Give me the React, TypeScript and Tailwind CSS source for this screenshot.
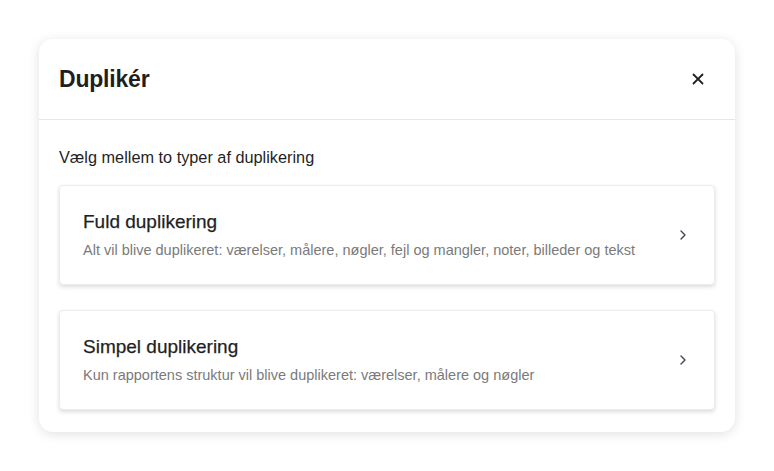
import { ChevronRight, X } from "lucide-react";

const options = [
  {
    title: "Fuld duplikering",
    description:
      "Alt vil blive duplikeret: værelser, målere, nøgler, fejl og mangler, noter, billeder og tekst",
  },
  {
    title: "Simpel duplikering",
    description:
      "Kun rapportens struktur vil blive duplikeret: værelser, målere og nøgler",
  },
];

export default function App() {
  return (
    <div className="min-h-screen bg-white pt-[39px] px-[39px] font-['Liberation_Sans',Arial,sans-serif] text-[#1f1f1f]">
      <div className="w-[696px] rounded-[14px] bg-white shadow-[0_2px_12px_rgba(0,0,0,0.12)]">
        {/* Header */}
        <div className="flex h-[81px] items-center justify-between border-b border-[#e6e6e6] pl-[20px] pr-[28px]">
          <h2 className="text-[23px] font-bold tracking-[-0.2px]">Duplikér</h2>
          <button className="text-[#222]" title="Luk">
            <X size={18} strokeWidth={2.4} />
          </button>
        </div>

        {/* Body */}
        <div className="px-[20px] pt-[26px] pb-[22px]">
          <p className="text-[16.3px] leading-[22px]">Vælg mellem to typer af duplikering</p>
          <div className="mt-[17px] flex flex-col gap-[25px]">
            {options.map((o) => (
              <button
                key={o.title}
                className="flex h-[100px] w-full items-center justify-between rounded-[4px] border border-[#ececec] bg-white pl-[23px] pr-[23px] text-left shadow-[0_2px_4px_rgba(0,0,0,0.14)]"
              >
                <div className="flex flex-col">
                  <span className="text-[19px] leading-[22px] text-[#1f1f1f] [-webkit-text-stroke:0.25px_#1f1f1f]">
                    {o.title}
                  </span>
                  <span className="mt-[7px] text-[14.5px] leading-[20px] text-[#7a7a7a]">
                    {o.description}
                  </span>
                </div>
                <ChevronRight size={16} strokeWidth={2} className="text-[#3f4452]" />
              </button>
            ))}
          </div>
        </div>
      </div>
    </div>
  );
}
